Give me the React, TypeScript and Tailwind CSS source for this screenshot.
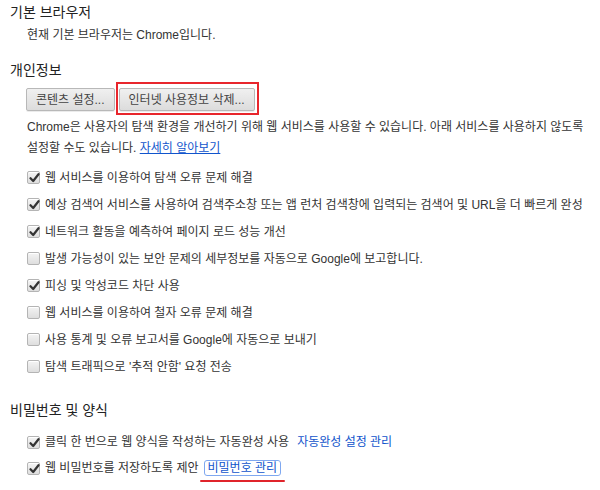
import React from 'react'

const font = { fontFamily: '"Liberation Sans", "Noto Sans CJK KR", sans-serif' }

function Check({ checked }: { checked: boolean }) {
  return (
    <span className="relative inline-flex h-[13px] w-[13px] shrink-0 items-center justify-center rounded-[2px] border border-[#b4b4b4] bg-gradient-to-b from-[#f4f4f4] to-[#dedede] shadow-[inset_0_1px_0_#fff]">
      {checked && (
        <svg width="11" height="10" viewBox="0 0 11 10" className="absolute left-[1px] top-[1px]">
          <path d="M1.5 5.2 L4.2 8 L9.5 1.2" fill="none" stroke="#333" strokeWidth="2.2" strokeLinecap="round" strokeLinejoin="round" />
        </svg>
      )}
    </span>
  )
}

function Row({ checked, children }: { checked: boolean; children: React.ReactNode }) {
  return (
    <div className="flex h-[27px] items-center gap-[5px] whitespace-nowrap">
      <Check checked={checked} />
      <span>{children}</span>
    </div>
  )
}

const btn =
  'h-[23px] rounded-[2px] border border-[#b8b8b8] bg-gradient-to-b from-[#f0f0f0] to-[#dcdcdc] px-[9px] text-[12px] text-[#444] shadow-[0_1px_0_rgba(0,0,0,0.08)]'

export default function App() {
  return (
    <div className="h-[490px] w-[600px] overflow-hidden bg-white pl-[10px] pt-[2px] text-[12px] text-[#333]" style={font}>
      <h2 className="h-[20px] text-[14px] leading-[20px] text-[#222]">기본 브라우저</h2>
      <div className="mt-[3px] h-[20px] pl-[17px] leading-[20px]">현재 기본 브라우저는 Chrome입니다.</div>

      <h2 className="mt-[15px] h-[20px] text-[14px] leading-[20px] text-[#222]">개인정보</h2>
      <div className="mt-[8px] flex gap-[4px] pl-[16px]">
        <button className={btn}>콘텐츠 설정...</button>
        <div className="relative">
          <button className={btn}>인터넷 사용정보 삭제...</button>
          <span className="pointer-events-none absolute -bottom-[4px] -left-[3px] -right-[4px] -top-[6px] border-2 border-[#e8262c]" />
        </div>
      </div>

      <p className="mt-[6px] pl-[17px] leading-[21px]">
        Chrome은 사용자의 탐색 환경을 개선하기 위해 웹 서비스를 사용할 수 있습니다. 아래 서비스를 사용하지 않도록
        <br />
        설정할 수도 있습니다. <a className="text-[#1155cc] underline">자세히 알아보기</a>
      </p>

      <div className="mt-[5px] pl-[17px]">
        <Row checked>웹 서비스를 이용하여 탐색 오류 문제 해결</Row>
        <Row checked>예상 검색어 서비스를 사용하여 검색주소창 또는 앱 런처 검색창에 입력되는 검색어 및 URL을 더 빠르게 완성</Row>
        <Row checked>네트워크 활동을 예측하여 페이지 로드 성능 개선</Row>
        <Row checked={false}>발생 가능성이 있는 보안 문제의 세부정보를 자동으로 Google에 보고합니다.</Row>
        <Row checked>피싱 및 악성코드 차단 사용</Row>
        <Row checked={false}>웹 서비스를 이용하여 철자 오류 문제 해결</Row>
        <Row checked={false}>사용 통계 및 오류 보고서를 Google에 자동으로 보내기</Row>
        <Row checked={false}>탐색 트래픽으로 '추적 안함' 요청 전송</Row>
      </div>

      <h2 className="mt-[20px] h-[20px] text-[14px] leading-[20px] text-[#222]">비밀번호 및 양식</h2>
      <div className="mt-[9px] pl-[17px]">
        <div className="flex h-[26px] items-center gap-[5px] whitespace-nowrap">
          <Check checked />
          <span>클릭 한 번으로 웹 양식을 작성하는 자동완성 사용</span>
          <a className="ml-[3px] text-[#1155cc]">자동완성 설정 관리</a>
        </div>
        <div className="flex h-[26px] items-center gap-[5px] whitespace-nowrap">
          <Check checked />
          <span>웹 비밀번호를 저장하도록 제안</span>
          <span className="relative">
            <a className="rounded-[3px] border border-[#7fa8f0] px-[3px] text-[#1155cc]">비밀번호 관리</a>
            <span className="absolute -bottom-[5px] -left-[4px] -right-[4px] h-[2px] rounded-full bg-[#e0242b]" />
          </span>
        </div>
      </div>
    </div>
  )
}
